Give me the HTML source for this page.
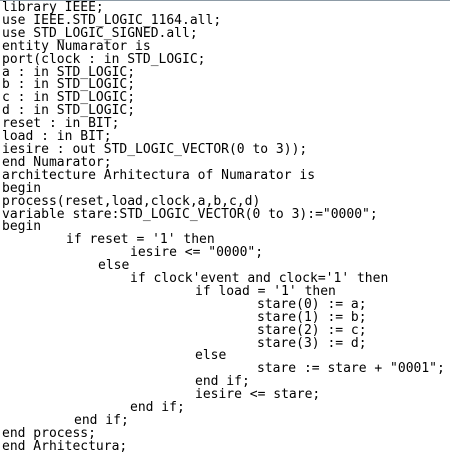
<!DOCTYPE html>
<html><head><style>
html,body{margin:0;padding:0;background:#fff;width:450px;height:458px;overflow:hidden}
body{border-top:1px solid #8d9ba6;box-sizing:border-box}
pre{margin:0;padding:0 0 0 2px;font-family:"DejaVu Sans Mono",monospace;font-size:13px;line-height:12.9px;color:#000;white-space:pre;position:relative;top:1px}
span{display:inline-block}
</style></head><body><pre>library IEEE;
use IEEE.STD_LOGIC_1164.all;
use STD_LOGIC_SIGNED.all;
entity Numarator is
port(clock : in STD_LOGIC;
a : in STD_LOGIC;
b : in STD_LOGIC;
c : in STD_LOGIC;
d : in STD_LOGIC;
reset : in BIT;
load : in BIT;
iesire : out STD_LOGIC_VECTOR(0 to 3));
end Numarator;
architecture Arhitectura of Numarator is
begin
process(reset,load,clock,a,b,c,d)
variable stare:STD_LOGIC_VECTOR(0 to 3):="0000";
begin
<span style="margin-left:64px">if reset = '1' then</span>
<span style="margin-left:128px">iesire &lt;= "0000";</span>
<span style="margin-left:96px">else</span>
<span style="margin-left:128px">if clock'event and clock='1' then</span>
<span style="margin-left:193px">if load = '1' then</span>
<span style="margin-left:255px">stare(0) := a;</span>
<span style="margin-left:255px">stare(1) := b;</span>
<span style="margin-left:255px">stare(2) := c;</span>
<span style="margin-left:255px">stare(3) := d;</span>
<span style="margin-left:193px">else</span>
<span style="margin-left:255px">stare := stare + "0001";</span>
<span style="margin-left:193px">end if;</span>
<span style="margin-left:193px">iesire &lt;= stare;</span>
<span style="margin-left:128px">end if;</span>
<span style="margin-left:72px">end if;</span>
end process;
end Arhitectura;</pre></body></html>
